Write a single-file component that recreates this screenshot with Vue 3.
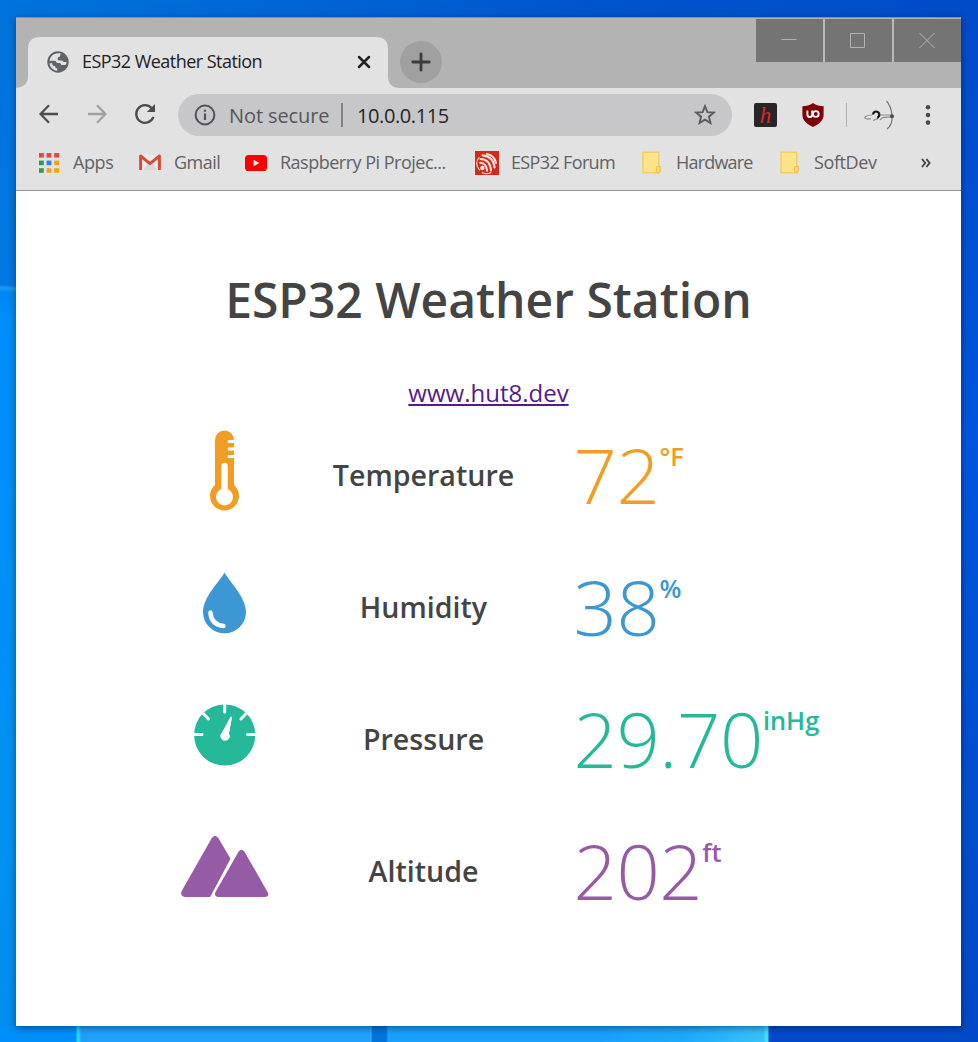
<script setup>
const bookmarks = [
  { icon: 'apps', label: 'Apps', slot: 'bm-apps' },
  { icon: 'gmail', label: 'Gmail', slot: 'bm-gmail' },
  { icon: 'youtube', label: 'Raspberry Pi Projec...', slot: 'bm-pi' },
  { icon: 'esp', label: 'ESP32 Forum', slot: 'bm-esp' },
  { icon: 'folder', label: 'Hardware', slot: 'bm-hw' },
  { icon: 'folder', label: 'SoftDev', slot: 'bm-soft' },
]
const appColors = ['#e04a3f', '#e04a3f', '#e04a3f', '#2f9a55', '#2a84ee', '#f2a60c', '#2f9a55', '#f2a60c', '#f2a60c']
const readings = [
  { key: 'temperature', label: 'Temperature', value: '72', unit: '°F' },
  { key: 'humidity', label: 'Humidity', value: '38', unit: '%' },
  { key: 'pressure', label: 'Pressure', value: '29.70', unit: 'inHg' },
  { key: 'altitude', label: 'Altitude', value: '202', unit: 'ft' },
]
</script>

<template>
  <div class="desktop">
    <div class="window">
      <header class="tabstrip">
        <svg class="tabshape" width="390" height="51" viewBox="0 0 390 51">
          <path d="M0 51Q12 50 12 39V12Q12 0 24 0H360Q372 0 372 12V39Q372 51 384 51Z" fill="#e2e2e2" />
        </svg>
        <div class="tab">
          <svg class="globe" width="22" height="22" viewBox="0 0 22 22">
            <circle cx="11" cy="11" r="10.7" fill="#5f6368" />
            <path d="M13.6 2.6C10 1.8 5.5 3 3.4 6.8L2.4 9.8H7.3C9 9.8 9.6 11 9.8 12H12.4C13.8 12 14.2 12.8 14.2 14H17.8C18.6 14 19 13.4 19.4 12.2L19.6 11H17.2C16 11 15.6 10.4 15.4 9.6H12.2C11 9.6 10.6 8.8 10.6 7.6 10.6 6.2 11.4 5.8 13 5.8Z" fill="#e2e2e2" />
            <path d="M2.4 12.2C3 16 6 19.4 10.2 19.7V17.4C8.6 17.2 8.2 16.2 8.2 15.2 6 15.2 5.4 14.4 5.2 12.2Z" fill="#e2e2e2" />
          </svg>
          <span class="tabtitle">ESP32 Weather Station</span>
          <svg class="tabclose" width="14" height="14" viewBox="0 0 14 14"><path d="M2 2L12 12M12 2L2 12" stroke="#202124" stroke-width="2.5" stroke-linecap="round" /></svg>
        </div>
        <div class="newtab"><svg width="20" height="20" viewBox="0 0 20 20"><path d="M10 1.8V18.2M1.8 10H18.2" stroke="#3c3c3e" stroke-width="2.8" stroke-linecap="round" /></svg></div>
        <div class="controls">
          <div class="ctl"><svg width="16" height="16" viewBox="0 0 16 16"><path d="M.5 6.5H15.5" /></svg></div>
          <div class="ctl"><svg width="16" height="16" viewBox="0 0 16 16"><path d="M.5 .5H14.5V14.5H.5Z" /></svg></div>
          <div class="ctl"><svg width="16" height="16" viewBox="0 0 16 16"><path d="M.5 0L15.5 15M15.5 0L.5 15" /></svg></div>
        </div>
      </header>

      <div class="toolbar">
        <svg class="nav" width="20" height="20" viewBox="0 0 20 20"><path d="M19 10H1.8M10 1.3L1.5 10 10 18.7" /></svg>
        <svg class="nav fwd" width="20" height="20" viewBox="0 0 20 20"><path d="M1 10H18.2M10 1.3L18.5 10 10 18.7" /></svg>
        <svg class="nav reload" width="22" height="22" viewBox="0 0 22 22">
          <path d="M17.7 5.2A8.8 8.8 0 1 0 19.4 13.8" /><path d="M21 .9V9H12.8Z" fill="#4c4c4e" stroke="none" />
        </svg>
        <div class="omnibox">
          <svg width="22" height="22" viewBox="0 0 22 22"><circle cx="11" cy="11" r="9.4" fill="none" stroke="#505256" stroke-width="2" /><path d="M11 9.6V16M11 5.7V7.8" stroke="#505256" stroke-width="2.2" /></svg>
          <span class="insecure">Not secure</span>
          <i class="sep"></i>
          <span class="url">10.0.0.115</span>
          <svg class="star" width="22" height="22" viewBox="0 0 22 22"><path d="M11 2.2L13.4 8.1 19.7 8.6 14.9 12.7 16.5 19 11 15.6 5.5 19 7.1 12.7 2.3 8.6 8.6 8.1Z" fill="none" stroke="#5a5b5e" stroke-width="1.9" /></svg>
        </div>
        <div class="ext-h"><span>h</span></div>
        <svg class="shield" width="22" height="24" viewBox="0 0 22 24">
          <path d="M11 0C14 2.2 18 3.2 21.6 3.2V12C21.6 18 16 21.6 11 24 6 21.6.4 18 .4 12V3.2C4 3.2 8 2.2 11 0Z" fill="#800008" />
          <path d="M5.4 7.5V11.6Q5.4 14 7.7 14T10.2 11.6V7.5" fill="none" stroke="#fff" stroke-width="1.9" /><circle cx="13.8" cy="11" r="2.9" fill="none" stroke="#fff" stroke-width="1.9" />
        </svg>
        <i class="extsep"></i>
        <svg class="avatar" width="32" height="30" viewBox="0 0 32 30" fill="none">
          <path d="M22.5 1Q27.2 6 28 15.5T23 29" stroke="#77777a" stroke-width="1.2" />
          <path d="M8 15Q1 15.5 .8 17.8 2 19.4 7 18.6M9 20.5L14.5 18.4M16 20L18.5 17.6 27.5 16.8M16 15H27" stroke="#8c8c8e" stroke-width="1.2" />
          <circle cx="28" cy="16.2" r="2" fill="#4b4b4c" />
          <path d="M9 14.5C9.3 11.6 12 10.8 14 12.2S15.8 16.8 13.2 17.6" stroke="#151515" stroke-width="2.2" />
        </svg>
        <svg class="dots" width="6" height="20" viewBox="0 0 6 20" fill="#4b4b4d"><circle cx="3" cy="2.3" r="2.3" /><circle cx="3" cy="10" r="2.3" /><circle cx="3" cy="17.6" r="2.3" /></svg>
      </div>

      <nav class="bookmarks">
        <div v-for="b in bookmarks" :key="b.label" class="bookmark" :class="b.slot">
          <div class="bmicon">
            <svg v-if="b.icon === 'apps'" width="20" height="20" viewBox="0 0 20 20">
              <rect v-for="(c, i) in appColors" :key="i" :x="(i % 3) * 7.6" :y="Math.floor(i / 3) * 7.6" width="4.8" height="4.6" :fill="c" />
            </svg>
            <svg v-else-if="b.icon === 'gmail'" width="22" height="17" viewBox="0 0 22 17">
              <path d="M2 1H20V16H2Z" fill="#ececec" /><path d="M4 16L9 9 11 11 13 9 18 16Z" fill="#d8d8d8" />
              <path d="M1.6 16V2L11 9.6 20.4 2V16" fill="none" stroke="#d54b3e" stroke-width="3" stroke-linejoin="round" />
            </svg>
            <svg v-else-if="b.icon === 'youtube'" width="22" height="16" viewBox="0 0 22 16"><rect width="22" height="16" rx="3.6" fill="#f00" /><path d="M8.6 4.8L14.2 8 8.6 11.2Z" fill="#fff" /></svg>
            <svg v-else-if="b.icon === 'esp'" width="24" height="24" viewBox="0 0 24 24">
              <rect width="24" height="24" fill="#d42a16" />
              <g fill="none" stroke="#fbe3df" stroke-width="2.1" stroke-linecap="round">
                <path d="M4 6.5A9 9 0 0 0 4.5 19" stroke-width="1.1" /><path d="M7.3 21.8A10 10 0 0 0 16 21.5" stroke-width="1.1" />
                <path d="M12 3Q19.5 4.5 21 12" /><path d="M7.5 4.4Q18.5 5.5 19.6 16.5" /><path d="M5.5 8Q15.4 8.6 16 19.5" /><path d="M5.2 11.8Q11.3 12.3 12 19.6" />
              </g>
              <circle cx="7.3" cy="17" r="2.2" fill="#fbe3df" />
            </svg>
            <svg v-else class="folder" width="19" height="23" viewBox="0 0 19 23">
              <path d="M1 1.2H16.8V15.5H18V20.5L16 21.8H1Z" fill="#fde48b" stroke="#f2cf61" stroke-width="1.5" /><path d="M14.5 21V16.5Q14.5 15.5 15.8 15.5H18V20Q18 21.5 16.4 21.8Z" fill="#fbdc75" stroke="#ebc24c" stroke-width="1.2" />
            </svg>
          </div>
          <span>{{ b.label }}</span>
        </div>
        <svg class="more" width="10" height="10" viewBox="0 0 10 10"><path d="M1 1L4.2 5 1 9M5.4 1L8.6 5 5.4 9" fill="none" stroke="#454547" stroke-width="1.9" /></svg>
      </nav>

      <main class="page">
        <h1><span>ESP32 Weather Station</span></h1>
        <a class="site">www.hut8.dev</a>
        <section v-for="r in readings" :key="r.key" class="reading" :class="r.key">
          <div class="glyph">
            <svg v-if="r.key === 'temperature'" width="30" height="82" viewBox="0 0 30 82">
              <path d="M5 10A9.5 9.5 0 0 1 24 10V55A14.5 14.5 0 1 1 5 55Z" fill="currentColor" />
              <path d="M17.8 11.5H24.5M17.8 19H24.5M17.8 26.5H24.5" stroke="#fff" stroke-width="3" />
              <path d="M14.5 36V66" stroke="#fff" stroke-width="6.4" stroke-linecap="round" /><circle cx="14.5" cy="67" r="8.5" fill="#fff" />
            </svg>
            <svg v-else-if="r.key === 'humidity'" width="44" height="62" viewBox="0 0 44 62">
              <path d="M21.5 .6C25 8 43 25 43 40A21.5 21.3 0 0 1 0 40C0 25 18 8 21.5 .6Z" fill="currentColor" />
              <path d="M7.4 40.5Q8.2 52.5 20.5 54" stroke="#fff" stroke-width="4.4" stroke-linecap="round" fill="none" />
            </svg>
            <svg v-else-if="r.key === 'pressure'" width="62" height="62" viewBox="0 0 62 62">
              <circle cx="30.7" cy="31" r="30.6" fill="currentColor" />
              <path d="M30.7 -2V8M0 30.5H8M53.5 30.5H62M6 6L14.5 15M55.5 6L47 15" stroke="#fff" stroke-width="3" stroke-linecap="round" />
              <path d="M36 13.5Q37.5 11.5 38 13.8L35 29.5A4.6 4.6 0 1 1 28 28.6Z" fill="#fff" />
            </svg>
            <svg v-else width="88" height="62" viewBox="0 0 88 62">
              <path d="M30.7 2.2Q34 -2.3 37.5 2.2L49.5 22.8 29.2 61H4Q-1.5 60 .8 54.7Z" fill="currentColor" />
              <path d="M57.5 15.8Q60.5 11.8 63.5 15.8L86.8 56.4Q88.5 60.5 84 61H37Q32.5 60 34.7 55.8Z" fill="currentColor" />
            </svg>
          </div>
          <div class="label">{{ r.label }}</div>
          <div class="value">{{ r.value }}<sup>{{ r.unit }}</sup></div>
        </section>
      </main>
    </div>
  </div>
</template>

<style>
html, body { margin: 0; overflow: hidden; }
</style>

<style scoped>
* { box-sizing: border-box; }
svg { display: block; flex: none; }
.desktop {
  width: 978px; height: 1042px; padding: 17px 17px 16px 16px;
  font-family: "Open Sans", "Noto Sans", sans-serif;
  background:
    linear-gradient(90deg, #008ff8 0 76px, #20d8fc 77px 79px, #20a0fa 81px 370px, #38bdfa 371px, #0074da 372px 386px, #1aa0fa 388px 600px, #20aafa 690px, #38c2f8 764px, #43dcfa 765px 768px, #0049c8 769px 100%) 0 1026px / 978px 16px no-repeat,
    linear-gradient(183deg, #0073dc 0, #0078e2 268px, #189cf0 271px, #0086f0 276px, #008efa 300px, #0092f2 800px, #008df0 1026px) 0 17px / 16px 1009px no-repeat,
    linear-gradient(180deg, #004bc9 0, #0055dc 430px, #0049c6 1009px) 961px 17px / 17px 1009px no-repeat,
    linear-gradient(90deg, #0073dc, #0064d4 320px, #0054cb 600px, #004bc8) 0 0 / 978px 17px no-repeat;
}
.window { width: 945px; height: 1009px; background: #fff; box-shadow: 0 2px 7px rgba(0, 20, 50, .5); overflow: hidden; }
.tabstrip { position: relative; height: 71px; background: #b3b3b3; border-top: 1px solid #898e94; display: flex; align-items: flex-start; }
.tabshape { position: absolute; left: 0; top: 19px; }
.tab { position: relative; width: 384px; height: 51px; margin-top: 19px; padding: 0 0 1px 31px; display: flex; align-items: center; }
.globe { margin-right: 13px; }
.tabtitle { width: 275px; height: 28px; font-size: 18px; line-height: 26px; color: #1f2022; letter-spacing: -.54px; white-space: nowrap; }
.newtab { width: 42px; height: 42px; margin-top: 23px; border-radius: 50%; background: #a0a0a0; display: grid; place-items: center; }
.controls { margin: 1px 0 0 auto; display: flex; gap: 2px; background: #b9b9b9; }
.ctl { width: 67px; height: 43px; padding-right: 1px; background: #747474; display: grid; place-items: center; }
.ctl svg { fill: none; stroke: #b2b2b2; stroke-width: 1; }
.toolbar { height: 54px; background: #e2e2e2; display: flex; align-items: center; padding-left: 23px; }
.nav { fill: none; stroke: #4c4c4e; stroke-width: 2.3; margin: 0 28px 2px 0; }
.reload { margin: 0 22px 2px -1px; }
.fwd { stroke: #a0a0a2; }
.omnibox { width: 554px; height: 42px; border-radius: 21px; background: #c7c7c9; display: flex; align-items: center; padding: 0 16px; }
.insecure { width: 101px; margin: 0 11px 0 13px; font-size: 20px; color: #55565a; letter-spacing: -.1px; white-space: nowrap; }
.sep { width: 2px; height: 24px; background: #818184; }
.url { margin-left: 14px; font-size: 20px; color: #242527; letter-spacing: -.4px; }
.star { margin-left: auto; }
.ext-h { width: 23px; height: 24px; margin-left: 22px; border-radius: 2px; background: #262626; display: grid; place-items: center; color: #d9282a; font: italic 23px/23px "Liberation Serif", serif; }
.shield { margin-left: 25px; }
.extsep { width: 1px; height: 24px; margin-left: 22px; background: #b0b0b2; }
.avatar { margin-left: 17px; }
.dots { margin-left: 29px; }
.bookmarks { height: 49px; background: #e2e2e2; border-bottom: 1px solid #969698; display: flex; align-items: center; padding: 0 0 7px 21px; color: #606165; font-size: 18px; white-space: nowrap; }
.bookmark { display: flex; align-items: center; gap: 12px; flex: none; }
.bmicon { width: 24px; display: grid; place-items: center; }
.folder { margin-right: 2px; }
.bm-apps { width: 101px; }
.bm-gmail { width: 106px; }
.bm-pi { width: 231px; }
.bm-esp { width: 165px; }
.bm-hw { width: 138px; }
.bm-soft { width: 143px; }
.bookmark span { letter-spacing: -.5px; padding-bottom: 2px; }
.bm-apps span, .bm-soft span { letter-spacing: -.4px; }
.bm-esp span { letter-spacing: -.65px; }
.bm-hw span { letter-spacing: -.8px; }
.page { display: flex; flex-direction: column; align-items: center; font-family: "Open Sans", sans-serif; color: #444; }
h1 { margin: 74px 0 0; font-size: 48px; line-height: 70px; font-weight: 600; white-space: nowrap; }
.site { margin: 42px 0 0; height: 32px; font-size: 24px; line-height: 32px; font-weight: 400; color: #551a8b; text-decoration: underline; }
.reading { height: 132px; display: grid; grid-template-columns: 119px 279px 300px; margin-left: 52px; width: 698px; }
.temperature { color: #f19c23; }
.humidity { color: #3d97d3; }
.pressure { color: #25b899; }
.altitude { color: #955ba5; }
.glyph { height: 124px; display: grid; place-items: center; }
.label { color: #444; font-size: 28.6px; font-weight: 600; line-height: 132px; text-align: center; padding-right: 1px; }
.value { padding-left: 10px; font-size: 76px; font-weight: 300; line-height: 132px; letter-spacing: -.45px; white-space: nowrap; }
sup { font-size: 25.4px; font-weight: 600; line-height: 0; letter-spacing: 0; vertical-align: 38.5px; }
</style>
